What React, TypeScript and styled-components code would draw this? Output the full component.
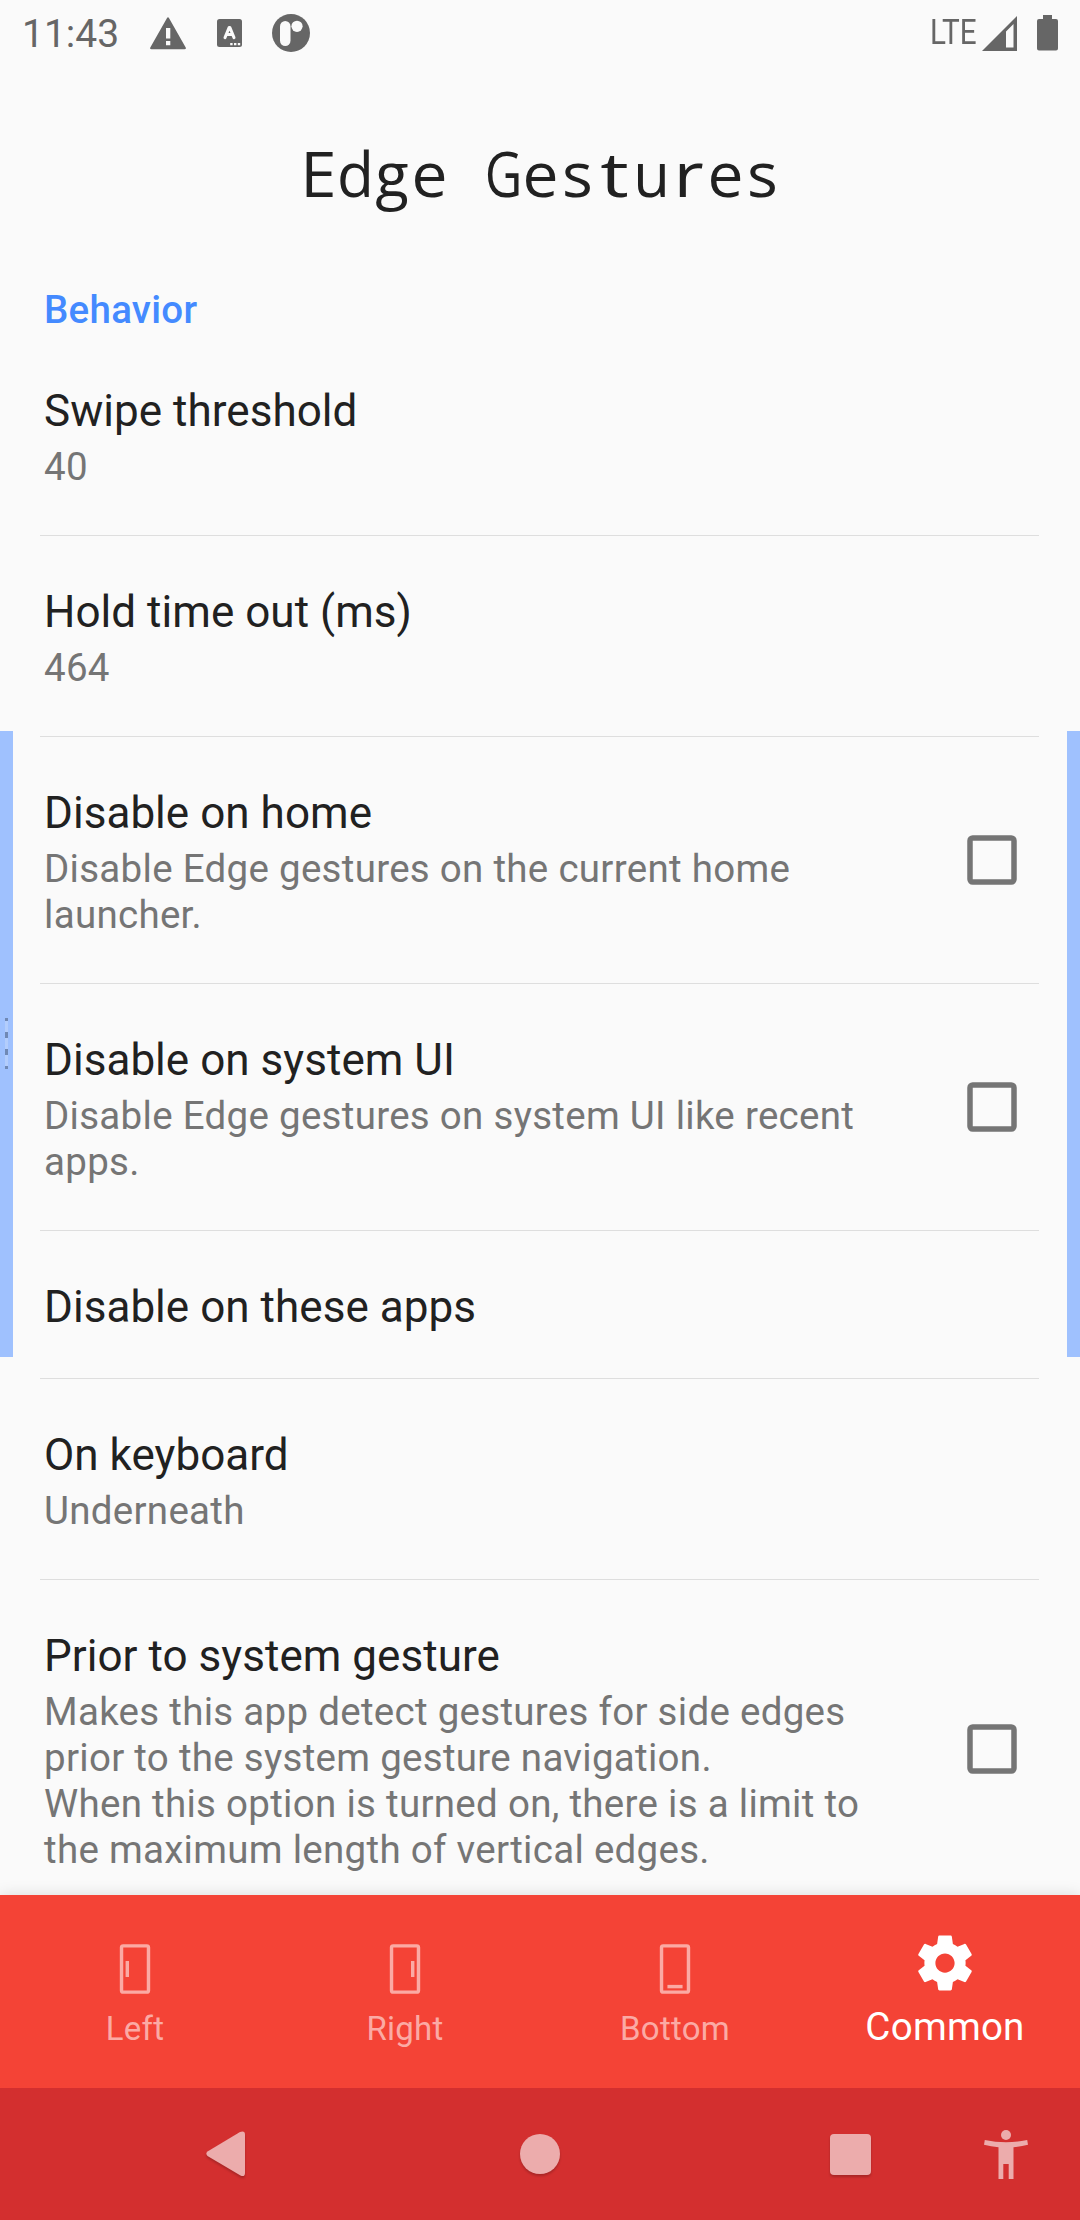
import React from "react";
import styled, { createGlobalStyle } from "styled-components";

const Global = createGlobalStyle`
  *, *::before, *::after { box-sizing: border-box; }
  body { margin: 0; background: #fafafa; font-family: Roboto, "Noto Sans", sans-serif; }
  svg { display: block; flex: none; }
`;

const Screen = styled.div`
  position: relative;
  display: flex;
  flex-direction: column;
  width: 1080px;
  height: 2220px;
  overflow: hidden;
  background: #fafafa;
`;

const StatusBar = styled.header`
  display: flex;
  align-items: center;
  flex: none;
  height: 66px;
  padding: 0 22px;
  color: #666;
`;

const Clock = styled.span`
  width: 128px;
  font-size: 39px;
  line-height: 46px;
  padding-top: 2px;
`;

const NoticeIcons = styled.div`
  display: flex;
  align-items: center;
  flex: 1;
`;

const LanguageIcon = styled.svg`
  margin-left: 31px;
`;

const AppIcon = styled.svg`
  margin-left: 29.5px;
`;

const BatteryIcon = styled.svg`
  margin-left: 20px;
`;

const Network = styled.span`
  width: 52px;
  margin-top: -2px;
  font-size: 34.5px;
  line-height: 40px;
  transform: scaleX(0.86);
  transform-origin: left;
`;

const TitleBar = styled.h1`
  display: flex;
  justify-content: center;
  flex: none;
  margin: 0;
  height: 204px;
  padding-top: 65px;
  color: #212121;
  font: 400 61.6px/84px "Open Sans", "Noto Sans", sans-serif;
`;

const Cell = styled.span<{ $stretch: number }>`
  display: inline-flex;
  justify-content: center;
  width: 37px;
  height: 84px;
  white-space: pre;
  transform: scaleX(${(p) => p.$stretch});
`;

const Content = styled.main`
  flex: 1;
  min-height: 0;
  overflow: hidden;
`;

const SectionTitle = styled.h2`
  margin: 0;
  height: 65px;
  padding: 17px 44px 0;
  color: #448aff;
  font-size: 38.5px;
  font-weight: 500;
  line-height: 46px;
  letter-spacing: 0.27px;
`;

const Preference = styled.section`
  display: flex;
  align-items: center;
  margin: 0 41px 0 40px;
  padding: 50px 22px 45px 4px;
  border-bottom: 1px solid #dedede;
`;

const PreferenceText = styled.div`
  flex: 1;
`;

const PreferenceTitle = styled.div`
  color: #212121;
  font-size: 44px;
  line-height: 52px;
  letter-spacing: 0.04px;
`;

const Summary = styled.div`
  margin-top: 7px;
  color: #757575;
  font-size: 38.5px;
  line-height: 46px;
  letter-spacing: 0.29px;
  white-space: pre-line;
`;

const Checkbox = styled.svg`
  margin-bottom: 5px;
  color: #757575;
`;

const TabBar = styled.nav`
  display: grid;
  grid-template-columns: repeat(4, 1fr);
  flex: none;
  height: 193px;
  background: #f44336;
  box-shadow: 0 0 14px rgba(0, 0, 0, 0.13);
  position: relative;
`;

const Tab = styled.div<{ $active?: boolean }>`
  display: flex;
  flex-direction: column;
  align-items: center;
  justify-content: space-between;
  padding: ${(p) => (p.$active ? "35px 0 38px" : "41px 0 37px")};
  color: ${(p) => (p.$active ? "#fff" : "#fbaaa4")};
  font-size: ${(p) => (p.$active ? "38.5px" : "33px")};
  line-height: ${(p) => (p.$active ? "47px" : "45px")};
  letter-spacing: 0.25px;
`;

const NavBar = styled.footer`
  position: relative;
  display: flex;
  align-items: center;
  flex: none;
  height: 132px;
  padding-left: 206px;
  background: #d32f2f;
  color: #ecacac;
`;

const NavIcon = styled.div<{ $gap?: number; $shadow?: boolean }>`
  margin-left: ${(p) => p.$gap ?? 0}px;
  filter: ${(p) => (p.$shadow ? "drop-shadow(0 2px 1px rgba(0,0,0,.2))" : "none")};
`;

const EdgeStrip = styled.div<{ $side: "left" | "right" }>`
  position: absolute;
  top: 731px;
  ${(p) => p.$side}: 0;
  display: flex;
  align-items: center;
  justify-content: center;
  width: 13px;
  height: 626px;
  background: #9fc1fe;
`;

const Handle = styled.span`
  width: 3px;
  height: 51px;
  margin-bottom: 1px;
  background: repeating-linear-gradient(#7089b5 0 3px, #b3cdfc 3px 14px, #7089b5 14px 17px);
`;

type Item = { title: string; summary?: string; check?: boolean };

const items: Item[] = [
  { title: "Swipe threshold", summary: "40" },
  { title: "Hold time out (ms)", summary: "464" },
  { title: "Disable on home", summary: "Disable Edge gestures on the current home\nlauncher.", check: true },
  { title: "Disable on system UI", summary: "Disable Edge gestures on system UI like recent\napps.", check: true },
  { title: "Disable on these apps" },
  { title: "On keyboard", summary: "Underneath" },
  {
    title: "Prior to system gesture",
    summary:
      "Makes this app detect gestures for side edges\nprior to the system gesture navigation.\nWhen this option is turned on, there is a limit to\nthe maximum length of vertical edges.",
    check: true,
  },
];

// Horizontal stretch that turns each proportional letter into a monospaced one.
const stretch: Record<string, number> = {
  E: 1.06,
  d: 0.98,
  e: 1.04,
  G: 0.84,
  s: 1.05,
  t: 1.3,
  u: 0.97,
  r: 1.2,
};

const StatusIcons = () => (
  <NoticeIcons>
    <svg width="36" height="33" viewBox="0 0 36 33" fill="currentColor">
      <path fillRule="evenodd" d="M16.9 1.2Q18 -.6 19.1 1.2L35.7 30.4Q36.5 32.3 34.5 32.3H1.5Q-.5 32.3 .3 30.4ZM16 11V21.5H20.3V11ZM16 24V28.3H20.3V24Z" />
    </svg>
    <LanguageIcon width="25" height="28" viewBox="0 0 25 28">
      <rect width="25" height="28" rx="2.5" fill="currentColor" />
      <path d="M8 18.6 12.2 8.4H12.8L17 18.6M9.5 15.4H15.5" fill="none" stroke="#fafafa" strokeWidth="3" strokeLinecap="round" strokeLinejoin="round" />
      <path d="M13.2 24h2.4v2.2h-2.4zM17 24h2.4v2.2H17zM20.8 24h2.4v2.2h-2.4z" fill="#fafafa" />
    </LanguageIcon>
    <AppIcon width="38" height="38" viewBox="0 0 38 38">
      <circle cx="19" cy="19" r="19" fill="currentColor" />
      <rect x="8" y="7" width="10.5" height="25" rx="5.25" fill="#fafafa" />
      <circle cx="25" cy="12.3" r="5.6" fill="#fafafa" />
    </AppIcon>
  </NoticeIcons>
);

const Phone = ({ mark }: { mark: string }) => (
  <svg width="66" height="66" viewBox="0 0 24 24" fill="none" stroke="currentColor" strokeWidth="1.25">
    <rect x="7.1" y="3.6" width="9.8" height="16.8" rx=".6" />
    <path d={mark} />
  </svg>
);

export default function App() {
  return (
    <>
      <Global />
      <Screen>
        <StatusBar>
          <Clock>11:43</Clock>
          <StatusIcons />
          <Network>LTE</Network>
          <svg width="35" height="35" viewBox="0 0 35 35">
            <path fill="currentColor" fillRule="evenodd" d="M35 0V35H0ZM24 15.5V31.5H31.5V8Z" />
          </svg>
          <BatteryIcon width="21" height="36" viewBox="0 0 21 36" fill="currentColor">
            <path d="M6 0H15V4H19Q21 4 21 6V33.5Q21 35.5 19 35.5H2Q0 35.5 0 33.5V6Q0 4 2 4H6Z" />
          </BatteryIcon>
        </StatusBar>
        <TitleBar>
          {[..."Edge Gestures"].map((c, i) => (
            <Cell key={i} $stretch={stretch[c] ?? 1}>
              {c}
            </Cell>
          ))}
        </TitleBar>
        <Content>
          <SectionTitle>Behavior</SectionTitle>
          {items.map((it) => (
            <Preference key={it.title}>
              <PreferenceText>
                <PreferenceTitle>{it.title}</PreferenceTitle>
                {it.summary && <Summary>{it.summary}</Summary>}
              </PreferenceText>
              {it.check && (
                <Checkbox width="50" height="50" viewBox="0 0 50 50" role="checkbox" aria-checked={false}>
                  <rect x="3" y="3" width="44" height="44" rx="2.7" fill="none" stroke="currentColor" strokeWidth="5.5" />
                </Checkbox>
              )}
            </Preference>
          ))}
        </Content>
        <TabBar>
          <Tab>
            <Phone mark="M9.2 9.1V14.9" />
            Left
          </Tab>
          <Tab>
            <Phone mark="M14.8 9.1V14.9" />
            Right
          </Tab>
          <Tab>
            <Phone mark="M9.25 18.4H14.75" />
            Bottom
          </Tab>
          <Tab $active>
            <svg width="66" height="66" viewBox="0 0 24 24" fill="currentColor">
              <path d="M19.43 12.98c.04-.32.07-.64.07-.98s-.03-.66-.07-.98l2.11-1.65c.19-.15.24-.42.12-.64l-2-3.46c-.12-.22-.39-.3-.61-.22l-2.49 1c-.52-.4-1.08-.73-1.69-.98l-.38-2.65C14.46 2.18 14.25 2 14 2h-4c-.25 0-.46.18-.49.42l-.38 2.65c-.61.25-1.17.59-1.69.98l-2.49-1c-.23-.09-.49 0-.61.22l-2 3.46c-.13.22-.07.49.12.64l2.11 1.65c-.04.32-.07.65-.07.98s.03.66.07.98l-2.11 1.65c-.19.15-.24.42-.12.64l2 3.46c.12.22.39.3.61.22l2.49-1c.52.4 1.08.73 1.69.98l.38 2.65c.03.24.24.42.49.42h4c.25 0 .46-.18.49-.42l.38-2.65c.61-.25 1.17-.59 1.69-.98l2.49 1c.23.09.49 0 .61-.22l2-3.46c.12-.22.07-.49-.12-.64l-2.11-1.65zM12 15.5c-1.93 0-3.5-1.57-3.5-3.5s1.57-3.5 3.5-3.5 3.5 1.57 3.5 3.5-1.57 3.5-3.5 3.5z" />
            </svg>
            Common
          </Tab>
        </TabBar>
        <NavBar>
          <NavIcon $shadow>
            <svg width="39" height="46" viewBox="0 0 39 46" fill="currentColor">
              <path d="M1.5 20.6 34 .9Q39 -.9 39 3.5V42Q39 46.4 34.5 44.6L1.5 25Q-.8 22.8 1.5 20.6Z" />
            </svg>
          </NavIcon>
          <NavIcon $shadow $gap={275}>
            <svg width="40" height="40" viewBox="0 0 40 40" fill="currentColor">
              <circle cx="20" cy="20" r="20" />
            </svg>
          </NavIcon>
          <NavIcon $shadow $gap={270}>
            <svg width="41" height="41" viewBox="0 0 41 41" fill="currentColor">
              <rect width="41" height="41" rx="4" />
            </svg>
          </NavIcon>
          <NavIcon $gap={113}>
            <svg width="44" height="49" viewBox="0 0 44 49" fill="currentColor">
              <circle cx="22" cy="5" r="5" />
              <path d="M.8 10Q22 14.5 43.2 10L44 14.8Q37 16.4 29.5 17.2V49H24.7V34H19.3V49H14.5V17.2Q7 16.4 0 14.8Z" />
            </svg>
          </NavIcon>
        </NavBar>
        <EdgeStrip $side="left">
          <Handle />
        </EdgeStrip>
        <EdgeStrip $side="right" />
      </Screen>
    </>
  );
}
